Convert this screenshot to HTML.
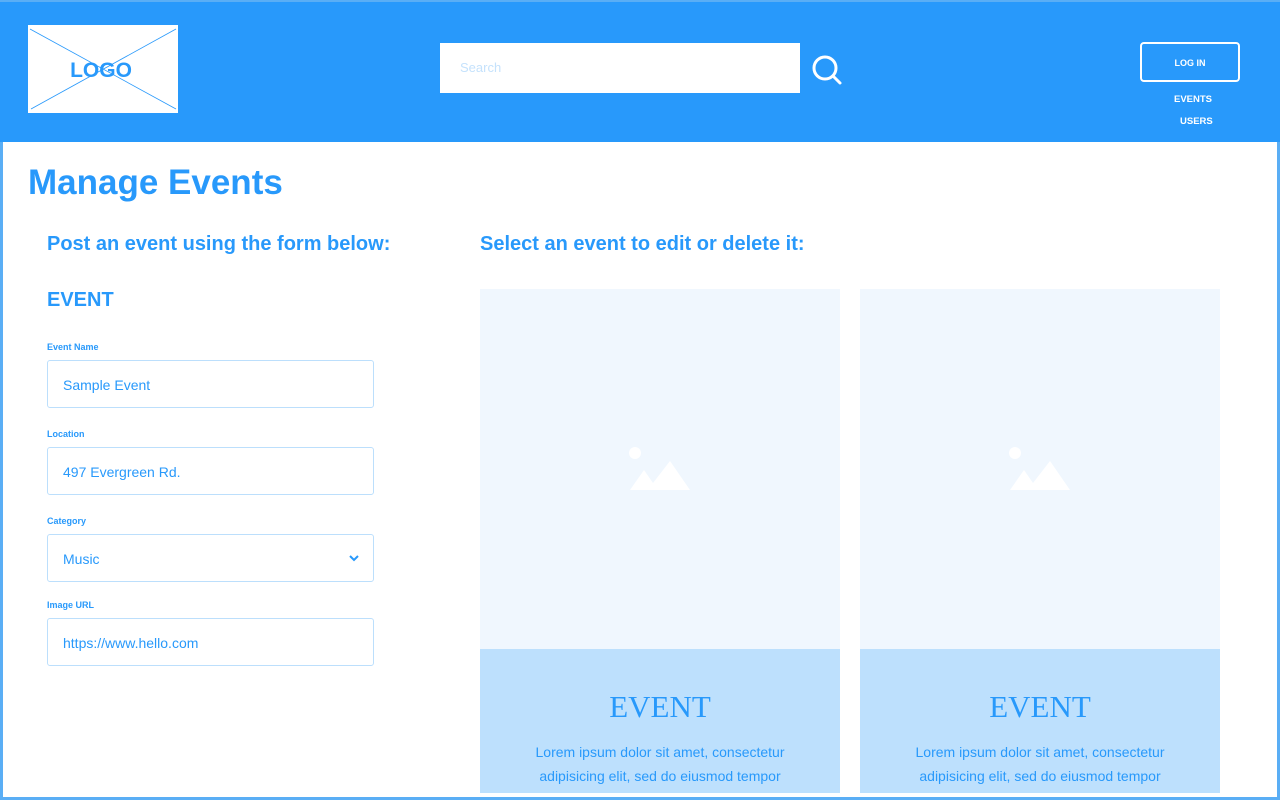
<!DOCTYPE html>
<html><head><meta charset="utf-8"><style>
*{margin:0;padding:0;box-sizing:border-box}
body{width:1280px;height:800px;overflow:hidden;background:#5aaef5;font-family:"Liberation Sans",Arial,sans-serif;position:relative}
.hdr{position:absolute;left:0;top:2px;width:1280px;height:140px;background:#2899fb}
.main{position:absolute;left:3px;top:142px;width:1274px;height:655px;background:#fff}
.abs{position:absolute}
.blue{color:#2899fb}
.lbl{position:absolute;left:47px;font-size:9px;font-weight:bold;color:#2899fb}
.inp{position:absolute;left:47px;width:327px;height:48px;border:1px solid #bcdffc;border-radius:3px;font-size:14px;color:#2899fb;padding-left:15px;line-height:49px}
.card{position:absolute;top:289px;width:360px;height:504px;background:#f0f7fe}
.cb{position:absolute;left:0;top:360px;width:360px;height:144px;background:#bde0fd;text-align:center;color:#2899fb}
.cb h3{font-family:"Liberation Serif",serif;font-weight:normal;font-size:31px;margin-top:41px;line-height:34px}
.cb p{font-size:14px;line-height:24px;margin-top:16px}
</style></head><body>
<div class="hdr">
 <div class="abs" style="left:28px;top:23px;width:150px;height:88px;background:#fff">
  <svg width="150" height="88" style="position:absolute;left:0;top:0"><line x1="2" y1="4" x2="148" y2="84" stroke="#2899fb" stroke-width="0.8"/><line x1="148" y1="4" x2="3" y2="84" stroke="#2899fb" stroke-width="0.8"/></svg>
  <div class="abs" style="left:0;width:146px;top:34px;text-align:center;font-weight:bold;font-size:21px;color:#2899fb">LOGO</div>
 </div>
 <div class="abs" style="left:440px;top:41px;width:360px;height:50px;background:#fff;color:#c5e2fc;font-size:13px;line-height:50px;padding-left:20px">Search</div>
 <svg class="abs" style="left:805px;top:48px" width="40" height="40"><circle cx="20" cy="18" r="11" fill="none" stroke="#fff" stroke-width="3"/><line x1="28" y1="26" x2="35" y2="33" stroke="#fff" stroke-width="3" stroke-linecap="round"/></svg>
 <div class="abs" style="left:1140px;top:40px;width:100px;height:40px;border:2px solid #fff;border-radius:4px;color:#fff;font-size:9px;font-weight:bold;text-align:center;line-height:38px">LOG IN</div>
 <div class="abs" style="left:1174px;top:92px;color:#fff;font-size:9.5px;font-weight:bold">EVENTS</div>
 <div class="abs" style="left:1180px;top:114px;color:#fff;font-size:9.5px;font-weight:bold">USERS</div>
</div>
<div class="main"></div>
<div class="abs blue" style="left:28px;top:163px;font-size:35px;font-weight:bold">Manage Events</div>
<div class="abs blue" style="left:47px;top:233px;font-size:20px;font-weight:bold">Post an event using the form below:</div>
<div class="abs blue" style="left:480px;top:233px;font-size:20px;font-weight:bold">Select an event to edit or delete it:</div>
<div class="abs blue" style="left:47px;top:289px;font-size:20px;font-weight:bold">EVENT</div>
<div class="lbl" style="top:342px">Event Name</div>
<div class="inp" style="top:360px">Sample Event</div>
<div class="lbl" style="top:429px">Location</div>
<div class="inp" style="top:447px">497 Evergreen Rd.</div>
<div class="lbl" style="top:516px">Category</div>
<div class="inp" style="top:534px">Music<svg style="position:absolute;right:14px;top:20px" width="10" height="7"><polyline points="1,1 5,5 9,1" fill="none" stroke="#2899fb" stroke-width="2"/></svg></div>
<div class="lbl" style="top:600px">Image URL</div>
<div class="inp" style="top:618px">https://www.hello.com</div>
<div class="card" style="left:480px">
 <svg class="abs" style="left:148px;top:157px" width="65" height="45"><circle cx="7" cy="7" r="6" fill="#fff"/><polygon points="2,44 16,24 25,37 42,15 62,44" fill="#fff"/></svg>
 <div class="cb"><h3>EVENT</h3><p>Lorem ipsum dolor sit amet, consectetur<br>adipisicing elit, sed do eiusmod tempor</p></div>
</div>
<div class="card" style="left:860px">
 <svg class="abs" style="left:148px;top:157px" width="65" height="45"><circle cx="7" cy="7" r="6" fill="#fff"/><polygon points="2,44 16,24 25,37 42,15 62,44" fill="#fff"/></svg>
 <div class="cb"><h3>EVENT</h3><p>Lorem ipsum dolor sit amet, consectetur<br>adipisicing elit, sed do eiusmod tempor</p></div>
</div>
</body></html>
